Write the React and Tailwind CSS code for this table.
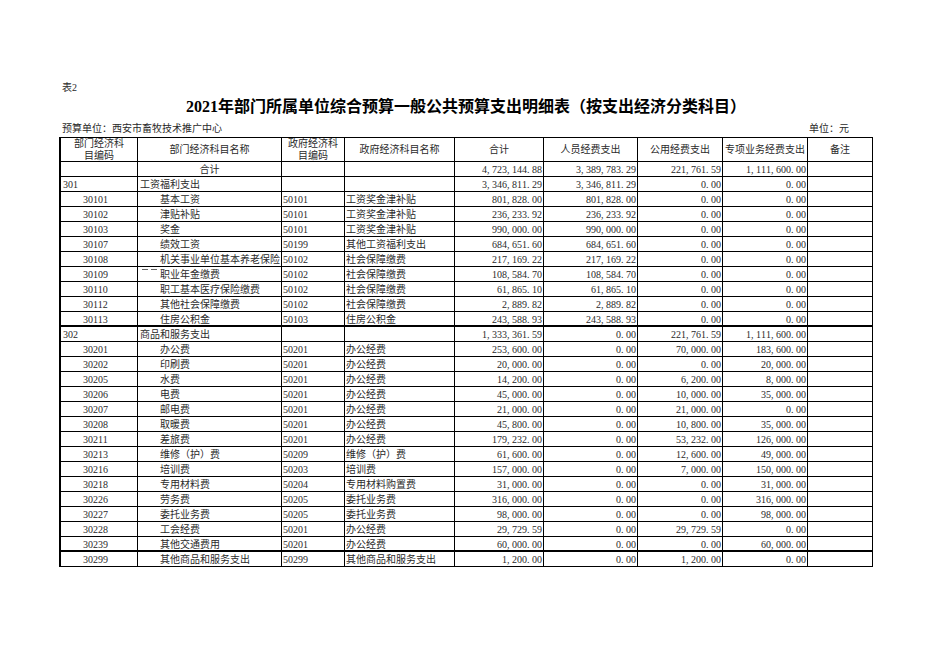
const rows = [
  { kind: 'total', name: '合计', a: '4,723,144.88', b: '3,389,783.29', c: '221,761.59', d: '1,111,600.00' },
  { kind: 'group', code: '301', name: '工资福利支出', a: '3,346,811.29', b: '3,346,811.29', c: '0.00', d: '0.00' },
  { code: '30101', name: '基本工资', gcode: '50101', gname: '工资奖金津补贴', a: '801,828.00', b: '801,828.00', c: '0.00', d: '0.00' },
  { code: '30102', name: '津贴补贴', gcode: '50101', gname: '工资奖金津补贴', a: '236,233.92', b: '236,233.92', c: '0.00', d: '0.00' },
  { code: '30103', name: '奖金', gcode: '50101', gname: '工资奖金津补贴', a: '990,000.00', b: '990,000.00', c: '0.00', d: '0.00' },
  { code: '30107', name: '绩效工资', gcode: '50199', gname: '其他工资福利支出', a: '684,651.60', b: '684,651.60', c: '0.00', d: '0.00' },
  { code: '30108', name: '机关事业单位基本养老保险', gcode: '50102', gname: '社会保障缴费', a: '217,169.22', b: '217,169.22', c: '0.00', d: '0.00' },
  { code: '30109', name: '职业年金缴费', gcode: '50102', gname: '社会保障缴费', a: '108,584.70', b: '108,584.70', c: '0.00', d: '0.00', mark: true },
  { code: '30110', name: '职工基本医疗保险缴费', gcode: '50102', gname: '社会保障缴费', a: '61,865.10', b: '61,865.10', c: '0.00', d: '0.00' },
  { code: '30112', name: '其他社会保障缴费', gcode: '50102', gname: '社会保障缴费', a: '2,889.82', b: '2,889.82', c: '0.00', d: '0.00' },
  { code: '30113', name: '住房公积金', gcode: '50103', gname: '住房公积金', a: '243,588.93', b: '243,588.93', c: '0.00', d: '0.00', thick: true },
  { kind: 'group', code: '302', name: '商品和服务支出', a: '1,333,361.59', b: '0.00', c: '221,761.59', d: '1,111,600.00' },
  { code: '30201', name: '办公费', gcode: '50201', gname: '办公经费', a: '253,600.00', b: '0.00', c: '70,000.00', d: '183,600.00' },
  { code: '30202', name: '印刷费', gcode: '50201', gname: '办公经费', a: '20,000.00', b: '0.00', c: '0.00', d: '20,000.00' },
  { code: '30205', name: '水费', gcode: '50201', gname: '办公经费', a: '14,200.00', b: '0.00', c: '6,200.00', d: '8,000.00' },
  { code: '30206', name: '电费', gcode: '50201', gname: '办公经费', a: '45,000.00', b: '0.00', c: '10,000.00', d: '35,000.00' },
  { code: '30207', name: '邮电费', gcode: '50201', gname: '办公经费', a: '21,000.00', b: '0.00', c: '21,000.00', d: '0.00' },
  { code: '30208', name: '取暖费', gcode: '50201', gname: '办公经费', a: '45,800.00', b: '0.00', c: '10,800.00', d: '35,000.00' },
  { code: '30211', name: '差旅费', gcode: '50201', gname: '办公经费', a: '179,232.00', b: '0.00', c: '53,232.00', d: '126,000.00' },
  { code: '30213', name: '维修（护）费', gcode: '50209', gname: '维修（护）费', a: '61,600.00', b: '0.00', c: '12,600.00', d: '49,000.00' },
  { code: '30216', name: '培训费', gcode: '50203', gname: '培训费', a: '157,000.00', b: '0.00', c: '7,000.00', d: '150,000.00' },
  { code: '30218', name: '专用材料费', gcode: '50204', gname: '专用材料购置费', a: '31,000.00', b: '0.00', c: '0.00', d: '31,000.00' },
  { code: '30226', name: '劳务费', gcode: '50205', gname: '委托业务费', a: '316,000.00', b: '0.00', c: '0.00', d: '316,000.00' },
  { code: '30227', name: '委托业务费', gcode: '50205', gname: '委托业务费', a: '98,000.00', b: '0.00', c: '0.00', d: '98,000.00' },
  { code: '30228', name: '工会经费', gcode: '50201', gname: '办公经费', a: '29,729.59', b: '0.00', c: '29,729.59', d: '0.00' },
  { code: '30239', name: '其他交通费用', gcode: '50201', gname: '办公经费', a: '60,000.00', b: '0.00', c: '0.00', d: '60,000.00', thick: true },
  { code: '30299', name: '其他商品和服务支出', gcode: '50299', gname: '其他商品和服务支出', a: '1,200.00', b: '0.00', c: '1,200.00', d: '0.00' },
]

const font = { fontFamily: '"Liberation Serif", "Noto Sans CJK SC", serif' }

// SimSun-like fixed width figures: every char gets a 5px box
const Num = ({ v }) => (
  <span className="inline-flex">
    {[...v].map((ch, i) => (
      <span key={i} className={ch === ',' || ch === '.' ? 'inline-block w-[5px] text-left' : 'inline-block w-[5px] text-center'}>
        {ch}
      </span>
    ))}
  </span>
)

const Row = ({ r }) => {
  const base = 'h-[15px] border-r border-black text-[10px] leading-[15px] whitespace-nowrap ' + (r.thick ? 'border-b-2' : 'border-b')
  const num = base + ' text-right pr-[1px]'
  return (
    <>
      <div className={base + (r.kind ? ' pl-[2px]' : ' pl-[22px]')}>{r.code}</div>
      <div className={base + (r.kind === 'total' ? ' text-center' : r.kind ? ' pl-[2px]' : ' pl-[22px]') + ' relative'}>
        {r.name}
        {r.mark && (
          <span className="absolute left-[4px] top-[2px] flex gap-[3px]">
            <span className="w-[6px] h-px bg-[#666]" />
            <span className="w-[6px] h-px bg-[#666]" />
          </span>
        )}
      </div>
      <div className={base + ' pl-[1px]'}>{r.gcode}</div>
      <div className={base + ' pl-[1px]'}>{r.gname}</div>
      <div className={num}><Num v={r.a} /></div>
      <div className={num}><Num v={r.b} /></div>
      <div className={num}><Num v={r.c} /></div>
      <div className={num}><Num v={r.d} /></div>
      <div className={base} />
    </>
  )
}

export default function App() {
  const head = 'h-[24px] border-r border-b border-black text-[10px] leading-[12px] flex items-center justify-center text-center'
  return (
    <div className="min-h-screen w-full bg-white text-[#2a2a2a] pl-[59px] pt-[81px]" style={font}>
      <div className="w-[814px]">
        <div className="h-[14px] text-[10px] leading-[14px] pl-[3px]">表2</div>
        <div className="h-[24px] leading-[24px] text-center text-[16px] font-bold text-black">
          2021年部门所属单位综合预算一般公共预算支出明细表（按支出经济分类科目）
        </div>
        <div className="mt-[3px] h-[14px] flex justify-between text-[10px] leading-[14px] pl-[3px] pr-[24px]">
          <span>预算单位：西安市畜牧技术推广中心</span>
          <span>单位：元</span>
        </div>
        <div className="mt-px grid grid-cols-[77px_144px_63px_110px_89px_94px_85px_85px_65px] border-l-2 border-t border-black">
          <div className={head}>部门经济科<br />目编码</div>
          <div className={head}>部门经济科目名称</div>
          <div className={head}>政府经济科<br />目编码</div>
          <div className={head}>政府经济科目名称</div>
          <div className={head}>合计</div>
          <div className={head}>人员经费支出</div>
          <div className={head}>公用经费支出</div>
          <div className={head}>专项业务经费支出</div>
          <div className={head}>备注</div>
          {rows.map((r, i) => (
            <Row key={i} r={r} />
          ))}
        </div>
      </div>
    </div>
  )
}
